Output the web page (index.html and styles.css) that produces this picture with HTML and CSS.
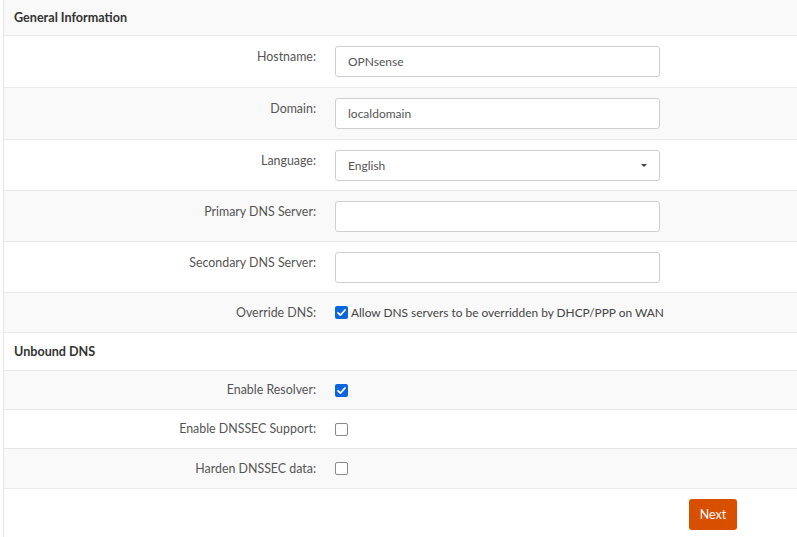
FILE: index.html
```html
<!DOCTYPE html>
<html>
<head>
<meta charset="utf-8">
<link rel="stylesheet" href="styles.css">
</head>
<body>
<div class="panel">
  <div class="row head"><span>General Information</span></div>
  <div class="row field">
    <label class="lbl">Hostname:</label>
    <div class="ctl"><div class="input">OPNsense</div></div>
  </div>
  <div class="row field">
    <label class="lbl">Domain:</label>
    <div class="ctl"><div class="input">localdomain</div></div>
  </div>
  <div class="row field">
    <label class="lbl">Language:</label>
    <div class="ctl"><div class="input select">English<span class="caret"></span></div></div>
  </div>
  <div class="row field">
    <label class="lbl">Primary DNS Server:</label>
    <div class="ctl"><div class="input"></div></div>
  </div>
  <div class="row field">
    <label class="lbl">Secondary DNS Server:</label>
    <div class="ctl"><div class="input"></div></div>
  </div>
  <div class="row check">
    <label class="lbl">Override DNS:</label>
    <div class="ctl"><span class="cb on"><svg viewBox="0 0 13 13" width="13" height="13"><path d="M3 6.8 L5.4 9.1 L10 4" fill="none" stroke="#fff" stroke-width="1.8" stroke-linecap="round" stroke-linejoin="round"/></svg></span><span class="cbtext">Allow DNS servers to be overridden by DHCP/PPP on WAN</span></div>
  </div>
  <div class="row head sub"><span>Unbound DNS</span></div>
  <div class="row check">
    <label class="lbl">Enable Resolver:</label>
    <div class="ctl"><span class="cb on"><svg viewBox="0 0 13 13" width="13" height="13"><path d="M3 6.8 L5.4 9.1 L10 4" fill="none" stroke="#fff" stroke-width="1.8" stroke-linecap="round" stroke-linejoin="round"/></svg></span></div>
  </div>
  <div class="row check">
    <label class="lbl">Enable DNSSEC Support:</label>
    <div class="ctl"><span class="cb"></span></div>
  </div>
  <div class="row check">
    <label class="lbl">Harden DNSSEC data:</label>
    <div class="ctl"><span class="cb"></span></div>
  </div>
  <div class="footer"><button class="btn">Next</button></div>
</div>
</body>
</html>
```
FILE: styles.css
```css
html, body {
  margin: 0;
  padding: 0;
  background: #fff;
}
body {
  font-family: "Lato", "Liberation Sans", sans-serif;
  font-size: 12.4px;
  color: #555;
}
.panel {
  margin-left: 3px;
  border-left: 1px solid #e6e6e6;
  min-height: 537px;
  box-sizing: border-box;
}
.row {
  display: flex;
  border-bottom: 1px solid #e9e9e9;
  box-sizing: border-box;
}
.panel .row:nth-child(odd) {
  background: #f9f9f9;
}
.head {
  height: 36px;
  align-items: center;
  padding-left: 10px;
  font-weight: 700;
  font-size: 12.6px;
  color: #333;
}
.head.sub {
  height: 38px;
}
.field {
  height: 52px;
  padding-top: 10px;
}
.field:nth-child(4), .field:nth-child(5), .field:nth-child(6) {
  height: 51px;
}
.lbl {
  width: 312px;
  text-align: right;
  padding-top: 3px;
  line-height: 16px;
  flex: none;
}
.ctl {
  margin-left: 19px;
  display: flex;
  align-items: flex-start;
}
.input {
  width: 325px;
  height: 31px;
  box-sizing: border-box;
  border: 1px solid #cfcfcf;
  border-radius: 3px;
  background: #fff;
  padding: 0 12px;
  line-height: 30px;
  font-size: 12px;
  color: #555;
  position: relative;
}
.caret {
  position: absolute;
  right: 12px;
  top: 13px;
  width: 0;
  height: 0;
  border-left: 3px solid transparent;
  border-right: 3px solid transparent;
  border-top: 3px solid #444;
}
.check {
  height: 39px;
  align-items: center;
}
.check .lbl {
  padding-top: 0;
}
.check:nth-child(7), .check:nth-child(11) {
  height: 40px;
}
.check .ctl {
  align-items: center;
}
.cb {
  width: 13px;
  height: 13px;
  box-sizing: border-box;
  border: 1.5px solid #8a8a8a;
  border-radius: 2px;
  background: #fff;
  display: inline-flex;
}
.cb.on {
  border: none;
  background: #0b65dc;
}
.cbtext {
  margin-left: 3px;
  font-size: 11.9px;
  color: #444;
}
.footer {
  display: flex;
  justify-content: flex-end;
  padding: 10px 60px 0 0;
}
.btn {
  width: 48px;
  height: 31px;
  border: none;
  border-radius: 3px;
  background: #d94f00;
  color: #fff;
  font-family: "Lato", "Liberation Sans", sans-serif;
  font-size: 12.4px;
  padding: 0;
}
```
